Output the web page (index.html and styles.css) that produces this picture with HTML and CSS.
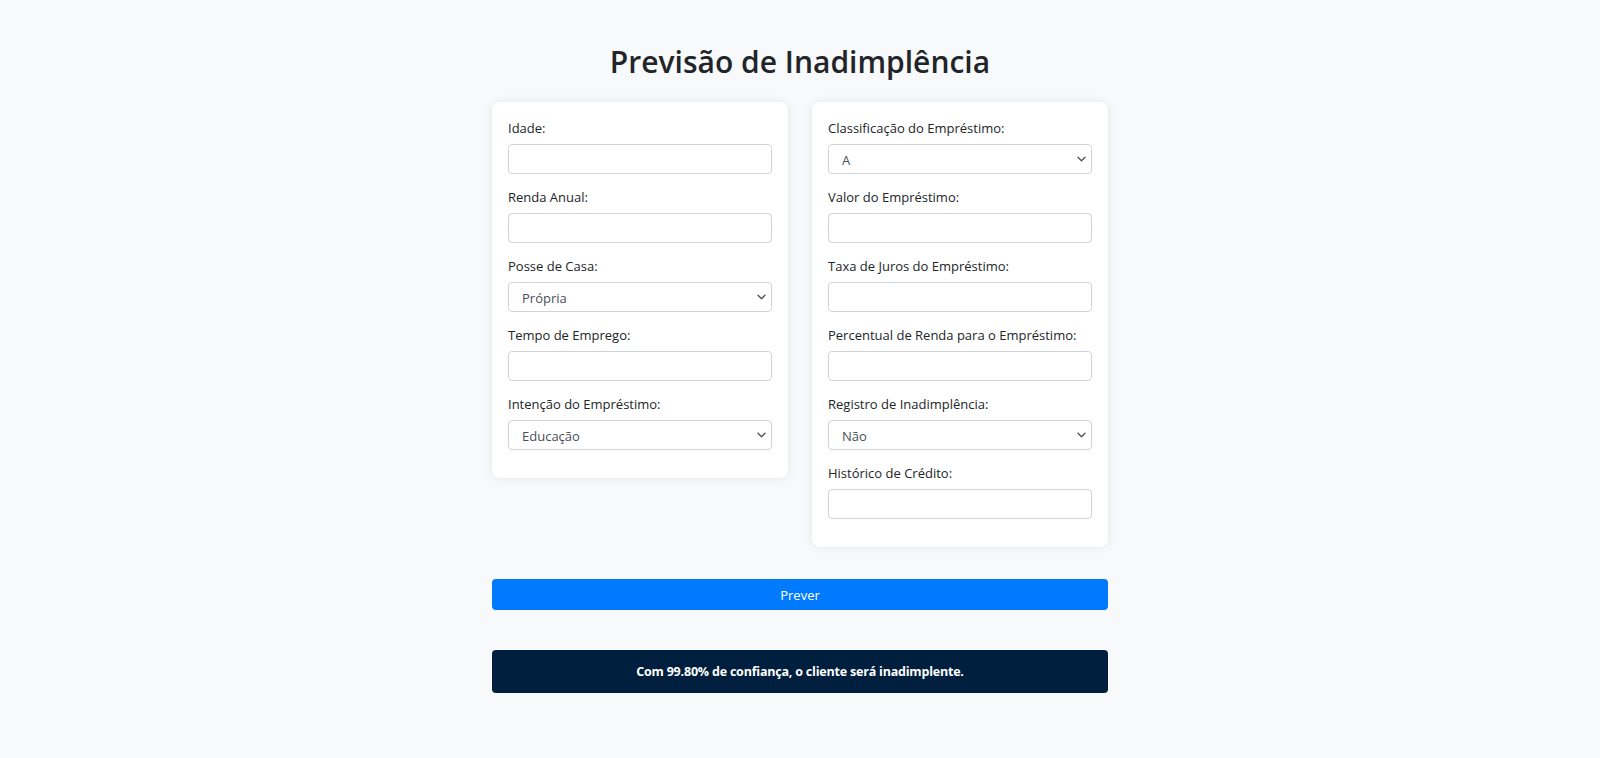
FILE: index.html
```html
<!DOCTYPE html>
<html lang="pt-BR">
<head>
<meta charset="utf-8">
<title>Previsão de Inadimplência</title>
<link rel="stylesheet" href="styles.css">
</head>
<body>
<main class="page">
  <h1 class="title">Previsão de Inadimplência</h1>
  <form class="form">
    <div class="columns">
      <section class="card">
        <div class="group">
          <label class="label" for="idade">Idade:</label>
          <input class="field" id="idade" type="text">
        </div>
        <div class="group">
          <label class="label" for="renda">Renda Anual:</label>
          <input class="field" id="renda" type="text">
        </div>
        <div class="group">
          <label class="label" for="posse">Posse de Casa:</label>
          <div class="select-wrap">
            <select class="field select" id="posse"><option>Própria</option></select>
            <svg class="chevron" width="9" height="6" viewBox="0 0 9 6"><path d="M1 1.2l3.5 3.5 3.5-3.5" fill="none" stroke="#555" stroke-width="1.4" stroke-linecap="round" stroke-linejoin="round"/></svg>
          </div>
        </div>
        <div class="group">
          <label class="label" for="tempo">Tempo de Emprego:</label>
          <input class="field" id="tempo" type="text">
        </div>
        <div class="group">
          <label class="label" for="intencao">Intenção do Empréstimo:</label>
          <div class="select-wrap">
            <select class="field select" id="intencao"><option>Educação</option></select>
            <svg class="chevron" width="9" height="6" viewBox="0 0 9 6"><path d="M1 1.2l3.5 3.5 3.5-3.5" fill="none" stroke="#555" stroke-width="1.4" stroke-linecap="round" stroke-linejoin="round"/></svg>
          </div>
        </div>
      </section>
      <section class="card">
        <div class="group">
          <label class="label" for="classe">Classificação do Empréstimo:</label>
          <div class="select-wrap">
            <select class="field select" id="classe"><option>A</option></select>
            <svg class="chevron" width="9" height="6" viewBox="0 0 9 6"><path d="M1 1.2l3.5 3.5 3.5-3.5" fill="none" stroke="#555" stroke-width="1.4" stroke-linecap="round" stroke-linejoin="round"/></svg>
          </div>
        </div>
        <div class="group">
          <label class="label" for="valor">Valor do Empréstimo:</label>
          <input class="field" id="valor" type="text">
        </div>
        <div class="group">
          <label class="label" for="taxa">Taxa de Juros do Empréstimo:</label>
          <input class="field" id="taxa" type="text">
        </div>
        <div class="group">
          <label class="label" for="percentual">Percentual de Renda para o Empréstimo:</label>
          <input class="field" id="percentual" type="text">
        </div>
        <div class="group">
          <label class="label" for="registro">Registro de Inadimplência:</label>
          <div class="select-wrap">
            <select class="field select" id="registro"><option>Não</option></select>
            <svg class="chevron" width="9" height="6" viewBox="0 0 9 6"><path d="M1 1.2l3.5 3.5 3.5-3.5" fill="none" stroke="#555" stroke-width="1.4" stroke-linecap="round" stroke-linejoin="round"/></svg>
          </div>
        </div>
        <div class="group">
          <label class="label" for="historico">Histórico de Crédito:</label>
          <input class="field" id="historico" type="text">
        </div>
      </section>
    </div>
    <button class="button" type="button">Prever</button>
  </form>
  <div class="result">Com 99.80% de confiança, o cliente será inadimplente.</div>
</main>
</body>
</html>
```
FILE: styles.css
```css
* {
  box-sizing: border-box;
}

html, body {
  margin: 0;
  padding: 0;
  background: #f8f9fa;
}

body {
  font-family: "Segoe UI", "Open Sans", "Noto Sans", sans-serif;
  color: #212529;
  font-size: 13px;
}

.page {
  width: 616px;
  margin: 0 auto;
  padding-top: 43px;
}

.title {
  margin: 0 0 21px;
  font-size: 30px;
  line-height: 38px;
  font-weight: 600;
  text-align: center;
  color: #212529;
}

.columns {
  display: flex;
  gap: 24px;
  align-items: flex-start;
}

.card {
  width: 296px;
  background: #fff;
  border-radius: 8px;
  padding: 16px 16px 15px;
  box-shadow: 0 0 10px rgba(0, 0, 0, 0.08);
}

.group {
  margin-bottom: 13px;
}

.label {
  display: block;
  font-size: 13px;
  line-height: 20px;
  margin-bottom: 6px;
  color: #212529;
}

.field {
  display: block;
  width: 100%;
  height: 30px;
  border: 1px solid #ced4da;
  border-radius: 4px;
  background: #fff;
  font-family: inherit;
  font-size: 13px;
  color: #495057;
  padding: 0 12px;
  outline: none;
}

.select-wrap {
  position: relative;
}

.select {
  appearance: none;
  -webkit-appearance: none;
  padding: 2px 24px 0 13px;
}

.chevron {
  position: absolute;
  right: 6px;
  top: 12px;
  pointer-events: none;
}

.button {
  display: block;
  width: 100%;
  height: 31px;
  margin-top: 32px;
  border: none;
  border-radius: 4px;
  background: #007bff;
  color: #fff;
  font-family: inherit;
  font-size: 13px;
}

.result {
  margin-top: 40px;
  padding: 12px;
  line-height: 19px;
  border-radius: 4px;
  background: #001f3f;
  color: #fff;
  font-size: 12.5px;
  font-weight: 700;
  letter-spacing: -0.2px;
  text-align: center;
}
```
